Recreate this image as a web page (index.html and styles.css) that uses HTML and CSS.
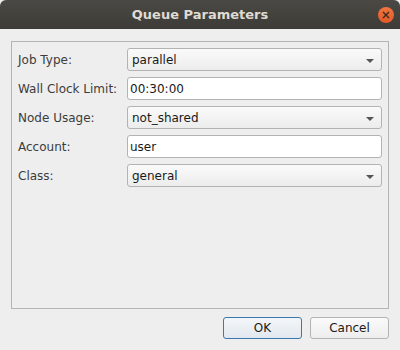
FILE: index.html
```html
<!DOCTYPE html>
<html lang="en">

<head>
  <meta charset="utf-8">
  <title>Queue Parameters</title>
  <link rel="stylesheet" href="styles.css">
</head>

<body>
  <div class="window">
    <div class="titlebar">
      <span class="title">Queue Parameters</span>
      <span class="close">
        <svg width="8" height="8" viewBox="0 0 8 8"><path d="M1 1L7 7M7 1L1 7" stroke="#3a2a20" stroke-width="1.4" /></svg>
      </span>
    </div>
    <div class="content">
      <div class="panel">
        <div class="row">
          <label>Job Type:</label>
          <div class="combo">parallel<span class="arrow"></span></div>
        </div>
        <div class="row">
          <label>Wall Clock Limit:</label>
          <div class="edit">00:30:00</div>
        </div>
        <div class="row">
          <label>Node Usage:</label>
          <div class="combo">not_shared<span class="arrow"></span></div>
        </div>
        <div class="row">
          <label>Account:</label>
          <div class="edit">user</div>
        </div>
        <div class="row">
          <label>Class:</label>
          <div class="combo">general<span class="arrow"></span></div>
        </div>
      </div>
      <div class="buttons">
        <button class="btn default">OK</button>
        <button class="btn">Cancel</button>
      </div>
    </div>
  </div>
</body>

</html>
```

FILE: styles.css
```css
body,
html {
  margin: 0;
  padding: 0;
  height: 100%;
  overflow: hidden;
  background: #eeeeee;
  font-family: "DejaVu Sans", sans-serif;
  font-size: 12px;
  color: #3c3c3c;
}

.window {
  width: 400px;
  height: 350px;
  display: flex;
  flex-direction: column;
}

.titlebar {
  height: 29px;
  flex: none;
  background: linear-gradient(#4a4944, #3c3b37);
  border-radius: 6px 6px 0 0;
  display: flex;
  align-items: center;
  justify-content: center;
  position: relative;
}

.title {
  color: #dfdbd2;
  font-weight: bold;
  font-size: 13px;
}

.close {
  position: absolute;
  right: 6px;
  top: 7px;
  width: 16px;
  height: 16px;
  border-radius: 50%;
  background: linear-gradient(#f0753f, #e05a28);
  display: flex;
  align-items: center;
  justify-content: center;
}

.content {
  flex: 1;
  padding: 12px 11px 0 11px;
  display: flex;
  flex-direction: column;
}

.panel {
  height: 260px;
  border: 1px solid #b4b4b4;
  padding: 6px 6px 0 6px;
  display: flex;
  flex-direction: column;
  gap: 6px;
}

.row {
  display: flex;
  align-items: center;
  height: 23px;
}

.row label {
  width: 109px;
}

.combo,
.edit {
  flex: 1;
  height: 21px;
  border: 1px solid #b3b3b3;
  border-radius: 3px;
  display: flex;
  align-items: center;
  padding: 0 4px;
  position: relative;
  color: #1a1a1a;
}

.edit {
  background: #ffffff;
  padding-left: 2px;
}

.combo {
  background: linear-gradient(#fafafa, #ececec);
}

.arrow {
  position: absolute;
  right: 7px;
  top: 10px;
  border-left: 4px solid transparent;
  border-right: 4px solid transparent;
  border-top: 4px solid #555555;
}

.buttons {
  display: flex;
  justify-content: flex-end;
  gap: 8px;
  padding-top: 8px;
}

.btn {
  width: 79px;
  height: 22px;
  font-family: "DejaVu Sans", sans-serif;
  font-size: 12px;
  color: #1a1a1a;
  border: 1px solid #b3b3b3;
  border-radius: 3px;
  background: linear-gradient(#fafafa, #ededed);
  padding: 0;
}

.btn.default {
  border-color: #3b79ad;
  background: linear-gradient(#f3f6f9, #e2e8ef);
}
```
